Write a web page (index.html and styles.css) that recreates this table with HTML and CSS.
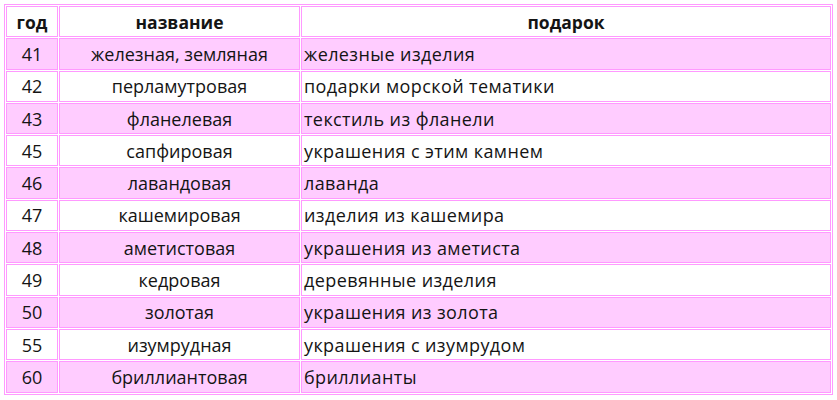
FILE: index.html
```html
<!DOCTYPE html>
<html lang="ru">
<head>
<meta charset="utf-8">
<link rel="stylesheet" href="styles.css">
</head>
<body>
<table class="gifts">
  <colgroup>
    <col class="c-year">
    <col class="c-name">
    <col class="c-gift">
  </colgroup>
  <thead>
    <tr><th>год</th><th>название</th><th>подарок</th></tr>
  </thead>
  <tbody>
    <tr class="pink"><td class="num">41</td><td class="name">железная, земляная</td><td class="gift">железные изделия</td></tr>
    <tr><td class="num">42</td><td class="name">перламутровая</td><td class="gift">подарки морской тематики</td></tr>
    <tr class="pink"><td class="num">43</td><td class="name">фланелевая</td><td class="gift">текстиль из фланели</td></tr>
    <tr><td class="num">45</td><td class="name">сапфировая</td><td class="gift">украшения с этим камнем</td></tr>
    <tr class="pink"><td class="num">46</td><td class="name">лавандовая</td><td class="gift">лаванда</td></tr>
    <tr><td class="num">47</td><td class="name">кашемировая</td><td class="gift">изделия из кашемира</td></tr>
    <tr class="pink"><td class="num">48</td><td class="name">аметистовая</td><td class="gift">украшения из аметиста</td></tr>
    <tr><td class="num">49</td><td class="name">кедровая</td><td class="gift">деревянные изделия</td></tr>
    <tr class="pink"><td class="num">50</td><td class="name">золотая</td><td class="gift">украшения из золота</td></tr>
    <tr><td class="num">55</td><td class="name">изумрудная</td><td class="gift">украшения с изумрудом</td></tr>
    <tr class="pink"><td class="num">60</td><td class="name">бриллиантовая</td><td class="gift">бриллианты</td></tr>
  </tbody>
</table>
</body>
</html>
```

FILE: styles.css
```css
html, body {
  background: #ffffff;
}
body {
  margin: 4px;
  font-family: "Open Sans", "Lato", "Liberation Sans", sans-serif;
  color: #141414;
}
.gifts {
  width: 829px;
  border-collapse: separate;
  border-spacing: 1px;
  border: 1px solid #ff99ff;
  table-layout: fixed;
}
.c-year { width: 52px; }
.c-name { width: 241px; }
.c-gift { width: auto; }
.gifts th,
.gifts td {
  box-sizing: border-box;
  height: 31.3px;
  border: 1px solid #ff99ff;
  padding: 0 2px;
  font-size: 18px;
  line-height: 20px;
  vertical-align: middle;
  white-space: nowrap;
}
.gifts th {
  font-weight: bold;
  font-size: 17.5px;
  text-align: center;
  background: #ffffff;
}
.gifts td.num,
.gifts td.name {
  text-align: center;
}
.gifts td.gift {
  text-align: left;
  letter-spacing: 0.4px;
}
.gifts tr.pink td {
  background: #ffccff;
}
```
